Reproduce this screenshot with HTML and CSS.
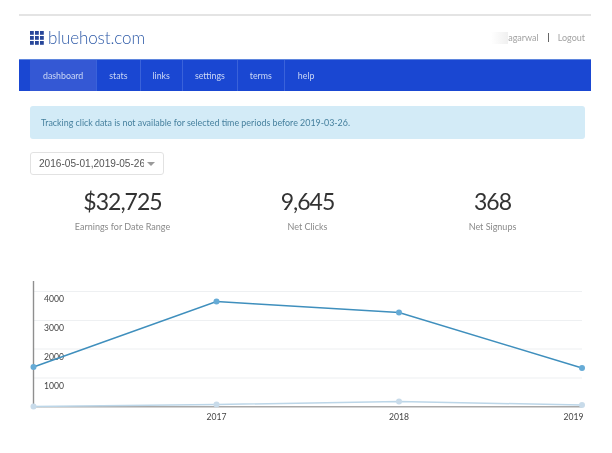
FILE: index.html
```html
<!DOCTYPE html>
<html lang="en">
<head>
<meta charset="utf-8">
<title>bluehost.com dashboard</title>
<link rel="stylesheet" href="styles.css">
</head>
<body>
<div class="page">
  <header class="top">
    <a class="logo">
      <svg class="logo-icon" width="14" height="14" viewBox="0 0 14 14" aria-hidden="true">
        <g fill="#28479a">
          <rect x="0" y="0" width="3.8" height="3.8"/><rect x="5" y="0" width="3.8" height="3.8"/><rect x="10" y="0" width="3.8" height="3.8"/>
          <rect x="0" y="5" width="3.8" height="3.8"/><rect x="5" y="5" width="3.8" height="3.8"/><rect x="10" y="5" width="3.8" height="3.8"/>
          <rect x="0" y="10" width="3.8" height="3.8"/><rect x="5" y="10" width="3.8" height="3.8"/><rect x="10" y="10" width="3.8" height="3.8"/>
        </g>
      </svg>
      <span class="logo-text">bluehost.com</span>
    </a>
    <div class="user">
      <span class="user-name"><span class="blur"></span>agarwal</span>
      <span class="user-sep"></span>
      <span>Logout</span>
    </div>
  </header>
  <nav class="nav">
    <a class="tab active">dashboard</a>
    <a class="tab">stats</a>
    <a class="tab">links</a>
    <a class="tab">settings</a>
    <a class="tab">terms</a>
    <a class="tab last">help</a>
  </nav>
  <main class="main">
    <div class="alert">Tracking click data is not available for selected time periods before 2019-03-26.</div>
    <div class="select"><span class="select-value">2016-05-01,2019-05-26</span><span class="caret"></span></div>
    <section class="stats">
      <div class="stat"><div class="num">$32,725</div><div class="lbl">Earnings for Date Range</div></div>
      <div class="stat"><div class="num">9,645</div><div class="lbl">Net Clicks</div></div>
      <div class="stat"><div class="num">368</div><div class="lbl">Net Signups</div></div>
    </section>
  </main>
  <svg class="chart" width="572" height="146" viewBox="19 280 572 146" aria-label="Earnings chart">
    <g stroke="#eef0f2" stroke-width="1.2">
      <line x1="33" y1="291.5" x2="582" y2="291.5"/>
      <line x1="33" y1="320.5" x2="582" y2="320.5"/>
      <line x1="33" y1="349" x2="582" y2="349"/>
      <line x1="33" y1="378" x2="582" y2="378"/>
    </g>
    <line x1="33.5" y1="281" x2="33.5" y2="407" stroke="#8f8f8f" stroke-width="1.4"/>
    <line x1="33" y1="406.8" x2="582" y2="406.8" stroke="#a9a9a9" stroke-width="1.4"/>
    <g class="axis">
      <text x="44" y="302">4000</text>
      <text x="44" y="331">3000</text>
      <text x="44" y="360">2000</text>
      <text x="44" y="389">1000</text>
      <text x="216.500" y="420" text-anchor="middle">2017</text>
      <text x="399" y="420" text-anchor="middle">2018</text>
      <text x="573.500" y="420" text-anchor="middle">2019</text>
    </g>
    <polyline points="33.500,367 216.500,301.500 399,312.500 582,368" fill="none" stroke="#3f8fbd" stroke-width="1.5"/>
    <g fill="#66abd6">
      <circle cx="33.500" cy="367" r="3"/><circle cx="216.500" cy="301.500" r="3"/><circle cx="399" cy="312.500" r="3"/><circle cx="582" cy="368" r="3"/>
    </g>
    <polyline points="33.500,406.500 216.500,404.500 399,401.500 582,405" fill="none" stroke="#bcd6e8" stroke-width="1.5"/>
    <g fill="#c8dbea">
      <circle cx="33.500" cy="406.500" r="3"/><circle cx="216.500" cy="404.500" r="3"/><circle cx="399" cy="401.500" r="3"/><circle cx="582" cy="405" r="3"/>
    </g>
  </svg>
</div>
</body>
</html>
```
FILE: styles.css
```css
* { box-sizing: border-box; }
html, body { margin: 0; padding: 0; background: #fff; }
body { font-family: Lato, "Liberation Sans", sans-serif; color: #333; overflow: hidden; }
.page { width: 572px; margin: 14px 0 0 19px; border-top: 2px solid #e4e4e4; filter: blur(0.3px); }
.top { height: 43px; display: flex; align-items: center; justify-content: space-between; padding: 0 6px 0 11px; }
.logo { display: flex; align-items: center; gap: 4px; }
.logo-icon { display: block; }
.logo-text { font-size: 17px; font-weight: 300; color: #2f5ba8; letter-spacing: -0.1px; }
.user { display: flex; align-items: center; gap: 9px; font-size: 9px; color: #a3a3a3; }
.user-name { display: flex; align-items: center; }
.blur { display: block; width: 17px; height: 12px; background: linear-gradient(90deg, #fff, #f0f0f0); }
.user-sep { width: 1px; height: 9px; background: #666; }
.nav { height: 32px; display: flex; background: #1a47d2; padding-left: 11px; border-top: 1px solid #5f86de; }
.tab { display: flex; align-items: center; padding: 0 12px; font-size: 8.8px; color: #ccd8f5; border-right: 1px solid #3a62da; }
.tab.active { background: #3458d4; padding: 0 13px; }
.tab.last { border-right: 0; padding: 0 13px; }
.main { padding: 15px 6px 0 11px; }
.alert { height: 33px; display: flex; align-items: center; padding-left: 11px; background: #d3ebf7; border-radius: 3px; font-size: 8.9px; color: #46809e; }
.select { margin-top: 13px; width: 134px; height: 23px; display: flex; align-items: center; gap: 3px; padding-left: 8px; border: 1px solid #e2e2e2; border-radius: 3px; background: #fff; }
.select-value { width: 105px; overflow: hidden; white-space: nowrap; font-family: "Liberation Sans", sans-serif; font-size: 10.1px; color: #555; }
.caret { width: 0; height: 0; border-left: 4px solid transparent; border-right: 4px solid transparent; border-top: 4px solid #9a9a9a; }
.stats { margin-top: 11px; display: flex; }
.stat { width: 185px; text-align: center; }
.num { font-size: 23px; line-height: 30px; font-weight: 400; letter-spacing: -1px; color: #333; }
.lbl { margin-top: 5px; font-size: 9px; line-height: 12px; color: #8a8a8a; }
.chart { display: block; margin-top: 47px; overflow: visible; }
.axis { font-family: Lato, "Liberation Sans", sans-serif; font-size: 8.6px; fill: #444; }
```
